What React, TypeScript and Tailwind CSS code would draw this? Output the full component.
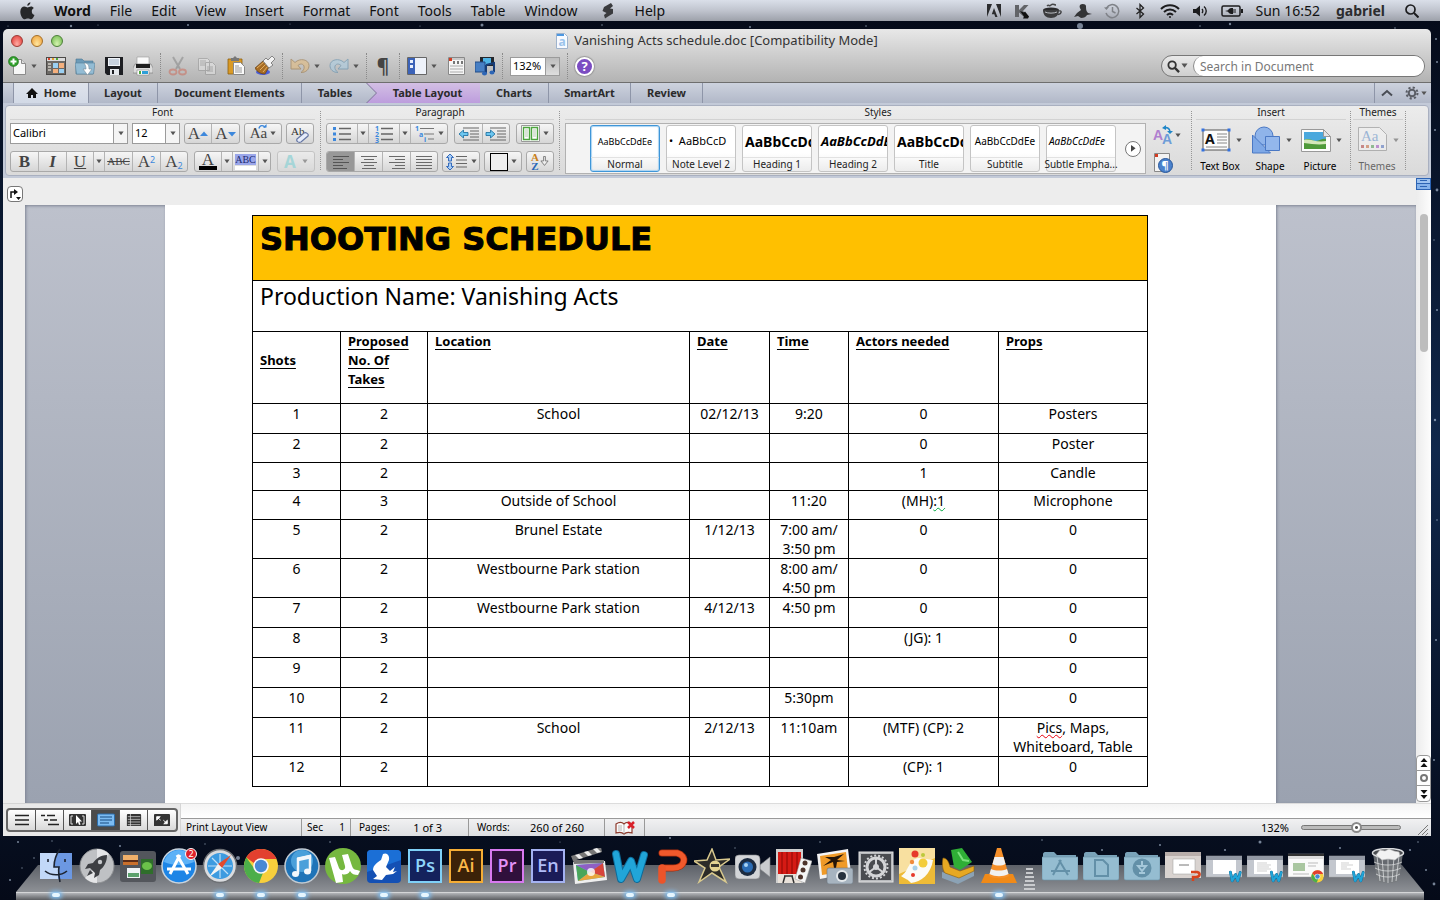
import type { ReactNode } from 'react'
import { useId } from 'react'

interface RowData {
	shot: string
	takes: string
	location?: string
	date?: string
	time?: string
	actors?: ReactNode
	props?: ReactNode
	height: string
}

const MENUS = ['File', 'Edit', 'View', 'Insert', 'Format', 'Font', 'Tools', 'Table', 'Window']

const ROWS: RowData[] = [
	{ shot: '1', takes: '2', location: 'School', date: '02/12/13', time: '9:20', actors: '0', props: 'Posters', height: 'h-[30px]' },
	{ shot: '2', takes: '2', actors: '0', props: 'Poster', height: 'h-[29px]' },
	{ shot: '3', takes: '2', actors: '1', props: 'Candle', height: 'h-[28px]' },
	{
		shot: '4',
		takes: '3',
		location: 'Outside of School',
		time: '11:20',
		actors: (
			<>
				(MH)
				<span className="underline decoration-green-600 decoration-wavy decoration-1">:1</span>
			</>
		),
		props: 'Microphone',
		height: 'h-[29px]',
	},
	{ shot: '5', takes: '2', location: 'Brunel Estate', date: '1/12/13', time: '7:00 am/ 3:50 pm', actors: '0', props: '0', height: 'h-[39px]' },
	{ shot: '6', takes: '2', location: 'Westbourne Park station', time: '8:00 am/ 4:50 pm', actors: '0', props: '0', height: 'h-[39px]' },
	{ shot: '7', takes: '2', location: 'Westbourne Park station', date: '4/12/13', time: '4:50 pm', actors: '0', props: '0', height: 'h-[30px]' },
	{ shot: '8', takes: '3', actors: '(JG): 1', props: '0', height: 'h-[30px]' },
	{ shot: '9', takes: '2', props: '0', height: 'h-[30px]' },
	{ shot: '10', takes: '2', time: '5:30pm', props: '0', height: 'h-[30px]' },
	{
		shot: '11',
		takes: '2',
		location: 'School',
		date: '2/12/13',
		time: '11:10am',
		actors: '(MTF) (CP): 2',
		props: (
			<>
				<span className="underline decoration-red-600 decoration-wavy decoration-1">Pics</span>, Maps, Whiteboard, Table
			</>
		),
		height: 'h-[39px]',
	},
	{ shot: '12', takes: '2', actors: '(CP): 1', props: '0', height: 'h-[30px]' },
]

const STYLES = [
	{ name: 'Normal', sample: 'AaBbCcDdEe', look: 'text-[9px] justify-center' },
	{ name: 'Note Level 2', sample: '•  AaBbCcD', look: 'text-[11px]' },
	{ name: 'Heading 1', sample: 'AaBbCcDd', look: 'text-[14px] font-bold' },
	{ name: 'Heading 2', sample: 'AaBbCcDdE', look: 'text-[13px] font-bold italic' },
	{ name: 'Title', sample: 'AaBbCcDd', look: 'text-[14px] font-bold' },
	{ name: 'Subtitle', sample: 'AaBbCcDdEe', look: 'text-[10px] justify-center' },
	{ name: 'Subtle Empha...', sample: 'AaBbCcDdEe', look: 'text-[10px] italic text-[#8c8c8c]' },
]

// x, y, radius of the brighter stars on the desktop
const STARS = [
	[8, 26, 0.6], [71, 26, 1.2], [98, 25, 0.6], [188, 25, 1], [290, 24, 0.5], [420, 26, 0.6], [482, 25, 1.5], [602, 25, 0.8],
	[750, 27, 1], [866, 26, 0.8], [1080, 26, 3], [1200, 26, 0.8], [1230, 24, 1.2], [1395, 28, 0.8], [1436, 39, 1], [1437, 62, 1],
	[1435, 130, 1], [1437, 190, 1.4], [1434, 240, 0.7], [1437, 310, 1], [1435, 420, 1.2], [1437, 520, 0.8], [1436, 640, 1], [1434, 760, 1],
	[18, 842, 1], [34, 858, 0.8], [52, 841, 0.7], [120, 846, 1], [205, 844, 0.7], [238, 858, 2], [330, 842, 0.8], [560, 842, 0.6],
	[670, 838, 1], [735, 848, 0.7], [820, 842, 0.8], [960, 850, 0.8], [1042, 840, 0.8], [1102, 850, 1], [1160, 845, 1], [1225, 850, 1.1],
	[1260, 842, 1.5], [1340, 848, 1], [1410, 850, 1.1], [1426, 870, 1], [1434, 884, 1.4], [10, 880, 1], [22, 868, 0.7], [1418, 842, 0.8],
]

const Arrow = ({ className = 'w-2' }: { className?: string }) => (
	<svg viewBox="0 0 8 6" className={`shrink-0 ${className}`} aria-hidden="true">
		<path d="M.5.5h7L4 5.5z" fill="#555" />
	</svg>
)

const Dots = () => <div className="-mx-[2px] h-[26px] border-l border-dotted border-[#8a8a8a]" />

const GroupLine = () => <div className="my-[5px] border-l border-dotted border-[#969696]" />

const Tool = ({ label, faded = false, children }: { label: string; faded?: boolean; children: ReactNode }) => (
	<button type="button" aria-label={label} className={`h-5 w-5 shrink-0 ${faded ? 'opacity-45' : ''}`}>
		<svg viewBox="0 0 20 20" className="h-5 w-5">
			{children}
		</svg>
	</button>
)

const ButtonSet = ({ children, faded = false }: { children: ReactNode; faded?: boolean }) => (
	<div
		className={`flex h-[21px] divide-x divide-[#b4b4b4] overflow-hidden rounded-[3px] border border-[#a9a9a9] bg-linear-to-b from-[#f6f6f6] to-[#d6d6d6] ${faded ? 'opacity-50' : ''}`}
	>
		{children}
	</div>
)

const Key = ({ label, width = 'w-7', pressed = false, children }: { label: string; width?: string; pressed?: boolean; children?: ReactNode }) => (
	<button
		type="button"
		aria-label={label}
		className={`flex items-center justify-center gap-[3px] font-['Liberation_Serif',serif] text-[17px] leading-none text-[#444] ${width} ${pressed ? 'bg-[#989898]' : ''}`}
	>
		{children}
	</button>
)

const ArrowKey = ({ label }: { label: string }) => (
	<Key label={label} width="w-[11px]">
		<Arrow className="w-[6px]" />
	</Key>
)

const Lines = ({ rows, color }: { rows: number[][]; color: string }) => (
	<svg viewBox="0 0 20 16" className="h-4 w-5" aria-hidden="true">
		{rows.map(([x, w, y]) => (
			<rect key={`${x}-${y}`} x={x} y={y} width={w} height="1" fill={color} />
		))}
	</svg>
)

const Combo = ({ label, value, width, small = false }: { label: string; value: string; width: string; small?: boolean }) => (
	<div className={`relative flex border border-[#9b9b9b] bg-white ${small ? 'h-[19px]' : 'h-[21px]'} ${width}`}>
		<select aria-label={label} className="w-full appearance-none bg-transparent pl-[2px] text-[11px] text-black outline-none">
			<option>{value}</option>
		</select>
		<span
			className={`pointer-events-none absolute inset-y-0 right-0 flex w-[14px] items-center justify-center border-l border-[#9b9b9b] ${small ? 'bg-linear-to-b from-[#bdbdbd] to-[#dedede]' : 'bg-[#f4f4f4]'}`}
		>
			<Arrow className="w-[6px]" />
		</span>
	</div>
)

const Group = ({ title, className = '', children }: { title: string; className?: string; children: ReactNode }) => (
	<div className={`flex flex-col ${className}`}>
		<div className="mb-[3px] h-[14px] border-b border-[#d2d2d2] text-center text-[10px] leading-[13px]">{title}</div>
		{children}
	</div>
)

const Tab = ({ children, className = '' }: { children: ReactNode; className?: string }) => (
	<button type="button" role="tab" className={`flex items-center justify-center gap-[6px] border-r border-[#8e95a8] ${className}`}>
		{children}
	</button>
)

const MenuBar = () => (
	<header className="relative flex h-[21px] items-center bg-linear-to-b from-[#dadfe9] via-[#c0c4ce] to-[#9da1aa] pr-[21px] pl-5 text-[14px] leading-[21px] text-[#111]">
		<button type="button" aria-label="Apple" className="mr-[19px] w-[15px]">
			<svg viewBox="0 0 15 18" className="h-[18px] w-[15px]">
				<path
					d="M10.4.3c.1 1.7-1.3 3.4-3.1 3.5C7.1 2.1 8.6.5 10.4.3zM13.8 6.1c-1.3.8-2 1.9-2 3.3 0 1.7 1 3 2.7 3.6-.8 2.2-2.1 4.3-3.7 4.3-1.2 0-1.5-.7-2.9-.7s-1.9.7-3 .7C2.7 17.3.3 13.3.3 9.7c0-3.3 2.1-5.1 4.1-5.1 1.3 0 2.4.9 3.2.9.8 0 2-.9 3.5-.9 1.1 0 2.1.6 2.7 1.5z"
					fill="#262729"
				/>
			</svg>
		</button>
		<nav className="flex items-center gap-[19px]">
			<button type="button" className="font-bold">
				Word
			</button>
			{MENUS.map((menu) => (
				<button type="button" key={menu}>
					{menu}
				</button>
			))}
			<div className="flex items-center gap-5 pl-1">
				<button type="button" aria-label="Scripts">
					<svg viewBox="0 0 14 16" className="h-4 w-[14px]">
						<path d="m10 0-7 4-1.5 4 4 2L3 12l1 3.5 3-2 5-3V6l-3-.5L12 3z" fill="#3a3b3e" />
					</svg>
				</button>
				<button type="button">Help</button>
			</div>
		</nav>
		<div className="ml-auto flex items-center gap-3">
			<svg viewBox="0 0 16 16" className="h-4 w-4">
				<path d="M1 1h5L1 14zM10 1h5v13zM8 5l3.5 9H9.3l-1-2.8H5.8z" fill="#2b2c2e" />
			</svg>
			<svg viewBox="0 0 16 16" className="h-4 w-4">
				<path d="M1 2h4v5l5-5h4.5L9 8l6 6h-5L5 9.5V14H1z" fill="#626468" />
				<path d="m6 8 4 1.5 1-1 4 5-1 2H9l1-2z" fill="#111" />
			</svg>
			<svg viewBox="0 0 20 16" className="h-4 w-5">
				<ellipse cx="9" cy="7" rx="8" ry="2.6" fill="#2a2a2c" />
				<path d="M1 7c0 5 3 8 8 8s8-3 8-8" fill="#3c3c3e" />
				<path d="M3 9c3 1.5 9 1.5 12 0" fill="none" stroke="#b9bcc2" />
				<path d="M17 8c3-1 3 3-1 3.5" fill="none" stroke="#3c3c3e" strokeWidth="1.3" />
				<path d="M5 3c2-2 2 1 4-1s3 0 5 0" fill="none" stroke="#47484a" strokeWidth="1.5" />
			</svg>
			<svg viewBox="0 0 18 16" className="h-4 w-[18px]">
				<path d="M6 2c2-2 6-1 6 1 0 3 0 5 2 7l4 1-5 1c-1 2-3 3-6 3l-3-2-4 1 3-4 4-3c-1-2-2-3-1-5z" fill="#333436" />
			</svg>
			<svg viewBox="0 0 16 16" className="h-4 w-4" fill="none" stroke="#7f8288" strokeWidth="1.5">
				<path d="M2.5 5A6.5 6.5 0 1 1 2 10M8.5 4v4.5l3 1.5" />
				<path d="M0 4.5 2.5 7 5 4z" fill="#7f8288" stroke="none" />
			</svg>
			<svg viewBox="0 0 16 16" className="h-4 w-4" fill="none" stroke="#222" strokeWidth="1.3">
				<path d="m4.5 5 7 6L8 14.5v-13L11.5 5l-7 6" />
			</svg>
			<svg viewBox="0 0 20 16" className="h-4 w-5" fill="none" stroke="#1c1c1e" strokeWidth="2">
				<path d="M1 6c5-5 13-5 18 0M4 9c3.5-3.3 8.500-3.3 12 0M7 12c1.8-1.6 4.2-1.6 6 0" />
				<circle cx="10" cy="14" r="1" fill="#1c1c1e" stroke="none" />
			</svg>
			<svg viewBox="0 0 16 16" className="h-4 w-4" fill="none" stroke="#1c1c1e" strokeWidth="1.4">
				<path d="M1 6h3l4-3.5v11L4 10H1z" fill="#1c1c1e" stroke="none" />
				<path d="M10 6c1 1 1 3 0 4M12 3.5c3 2.5 3 6.5 0 9" />
			</svg>
			<svg viewBox="0 0 24 16" className="h-4 w-6">
				<rect x="2" y="3" width="18" height="10" rx="1.5" fill="none" stroke="#1c1c1e" strokeWidth="1.5" />
				<path d="M21 6h2v4h-2zM5 8l3-.7C9 5 11 5 13 5v1.500h3v1h-3v1h3v1h-3V11c-2 0-4 0-5-2.3z" fill="#1c1c1e" />
			</svg>
			<span className="mr-1">Sun 16:52</span>
			<span className="mr-2 font-bold text-[#2c2c2e]">gabriel</span>
			<svg viewBox="0 0 14 14" className="h-[14px] w-[14px]" fill="none" stroke="#1c1c1e" strokeWidth="1.7">
				<circle cx="5.5" cy="5.5" r="4.5" />
				<path d="m9 9 4.5 4.5" strokeWidth="2" />
			</svg>
		</div>
	</header>
)

const TitleBar = () => (
	<div className="relative flex h-[23px] items-center justify-center">
		<div className="absolute left-2 flex gap-2">
			<button type="button" aria-label="Close" className="h-3 w-3 rounded-full border border-[#9c3a35] bg-radial-[at_50%_80%] from-[#ffaba3] to-[#e0342f]" />
			<button type="button" aria-label="Minimise" className="h-3 w-3 rounded-full border border-[#a56f28] bg-radial-[at_50%_80%] from-[#ffe7a0] to-[#ee9c32]" />
			<button type="button" aria-label="Zoom window" className="h-3 w-3 rounded-full border border-[#4d7f3a] bg-radial-[at_50%_80%] from-[#d5f3b0] to-[#6bb848]" />
		</div>
		<svg viewBox="0 0 12 16" className="mr-[6px] h-4 w-3">
			<path d="M.5.5h8l3 3v12H.5z" fill="#f7faff" stroke="#9fb3cc" />
			<path d="M1 1h7v2H1z" fill="#4d97e0" />
			<text x="6" y="13" fontSize="12" fontWeight="bold" textAnchor="middle" fill="#9cc4ec">
				a
			</text>
		</svg>
		<h1 className="text-[13px] leading-[23px] text-[#333]">Vanishing Acts schedule.doc [Compatibility Mode]</h1>
	</div>
)

const Toolbar = () => {
	const searchId = useId()
	return (
		<div className="flex h-[30px] items-center pr-[6px] pb-[2px] pl-[5px]">
			<div className="flex items-center gap-[9px]">
				<div className="flex items-center gap-[3px]">
					<Tool label="New">
						<path d="M5.5 3.5h8l4 4v11h-12z" fill="#f7f7f7" stroke="#8b8b8b" />
						<path d="M13.5 3.5v4h4" fill="#ddd" stroke="#8b8b8b" />
						<circle cx="5.5" cy="5.5" r="5" fill="#2f9e2a" stroke="#1d6e1a" strokeWidth=".6" />
						<path d="M5.5 2.5v6M2.5 5.5h6" stroke="#fff" strokeWidth="2" />
					</Tool>
					<Arrow className="w-[6px]" />
				</div>
				<Tool label="Gallery">
					<rect x=".5" y="1.5" width="19" height="17" fill="#6d6a66" stroke="#4c4a48" />
					<path d="M1 2h18v3H1z" fill="#dcdcdc" />
					<path d="M2 2h2v2H2z" fill="#d9442c" />
					<path d="M6 2h2v2H6z" fill="#e9a52e" />
					<path d="M10 2h2v2h-2z" fill="#4eab3c" />
					<path d="M2 7h3v2H2zM2 10h3v2H2zM2 13h3v2H2z" fill="#b9b5ae" />
					<path d="M7 7h5v5H7zM13 13h5v4h-5z" fill="#9bd0f2" />
					<path d="M13 7h5v5h-5zM7 13h5v4H7z" fill="#f5b07d" />
				</Tool>
				<Tool label="Open">
					<path d="M1 3h6l2 2h9v13H1z" fill="#6c9bb8" stroke="#4c7590" strokeWidth=".6" />
					<path d="M0 7h20l-1.500 11h-17z" fill="#93bcd4" stroke="#587f98" strokeWidth=".6" />
					<path d="M9 7c4 0 5 2 5 6h3l-4.500 6L8 13h3c0-2-.5-4-2-6z" fill="#fff" stroke="#7a8c98" strokeWidth=".6" />
				</Tool>
				<Tool label="Save">
					<path d="M1 1h18v18H3l-2-2z" fill="#1d1e22" />
					<path d="M4 2h12v8H4z" fill="#f0f3f7" />
					<path d="M5 4h10M5 6h10M5 8h10" stroke="#9fb0c4" />
					<path d="M6 13h9v6H6z" fill="#e5e8ec" />
					<path d="M8 14h2v4H8z" fill="#1d1e22" />
				</Tool>
				<Tool label="Print">
					<path d="M4 1h12v8H4z" fill="#fafafa" stroke="#999" strokeWidth=".6" />
					<path d="M2 8h16l2 4v5H0v-5z" fill="#dcdcdc" stroke="#777" strokeWidth=".6" />
					<path d="M3 8h14v4H3z" fill="#1e1e1e" />
					<path d="M4 14h12v5H4z" fill="#fff" stroke="#888" strokeWidth=".6" />
					<path d="M6 15h2v3H6z" fill="#4eab3c" />
					<path d="M9 15h6v3H9z" fill="#2e9fd8" />
				</Tool>
				<Dots />
				<Tool label="Cut" faded>
					<path d="M5 1l7 12M15 1 8 13" stroke="#777" strokeWidth="2" />
					<g fill="none" stroke="#cf5d4a" strokeWidth="1.8">
						<ellipse cx="5" cy="16" rx="3.5" ry="2.5" />
						<ellipse cx="14.5" cy="16" rx="3.5" ry="2.5" />
					</g>
				</Tool>
				<Tool label="Copy" faded>
					<path d="M1.5 2.5h9l2 2v10h-11zM8.5 6.5h7l3 3v9h-10z" fill="#eee" stroke="#8a8a8a" />
					<path d="M3 5h6M3 7h5M3 9h5M10 11h6M10 13h6M10 15h6" stroke="#8a8a8a" />
				</Tool>
				<Tool label="Paste">
					<path d="M2 3h14v15H2z" fill="#d99a26" stroke="#8d6012" strokeWidth=".8" />
					<path d="M5 2h2l2-2 2 2h2v3H5z" fill="#777" />
					<path d="M7.5 6.5h7l4 4v8h-11z" fill="#fbfbfb" stroke="#888" />
					<path d="M9 10h4M9 12h7M9 14h7M9 16h7" stroke="#999" />
				</Tool>
				<Tool label="Format painter">
					<ellipse cx="8" cy="16" rx="7" ry="3" fill="#4b5ed8" />
					<path d="M0 12 8 5l6 6-4 7c-4 0-8-2-10-6z" fill="#a86d24" stroke="#5a3710" strokeWidth=".6" />
					<path d="m2 12 7-6M5 14l6-6M8 16l5-6" stroke="#e2b063" />
					<path d="m8 5 3-3 2 2 4-4 3 3-4 4 2 2-4 3z" fill="#f2f2f2" stroke="#6e6e6e" strokeWidth=".8" />
				</Tool>
				<Dots />
				<div className="flex items-center gap-1">
					<Tool label="Undo" faded>
						<path d="M1 3v10h10L8 9.500c3-3 7-1 6 3-.4 2-2 3-3 4 5 0 8-3 8-7 0-6-9-8-14-3z" fill="#ecb767" stroke="#8f6120" />
					</Tool>
					<Arrow className="w-[6px]" />
				</div>
				<div className="flex items-center gap-1">
					<Tool label="Redo" faded>
						<path d="M19 3v10H9l3-3.500c-3-3-7-1-6 3 .4 2 2 3 3 4-5 0-8-3-8-7 0-6 9-8 14-3z" fill="#a3d0ec" stroke="#3f7ca5" />
					</Tool>
					<Arrow className="w-[6px]" />
				</div>
				<Dots />
				<button type="button" aria-label="Show formatting" className="w-[18px] text-[19px] leading-5 font-bold text-[#444]">
					¶
				</button>
				<Dots />
				<div className="flex items-center gap-1">
					<Tool label="Sidebar">
						<path d="M.5 1.5h19v17H.5z" fill="#eef2fa" stroke="#666" />
						<path d="M1 2h7v16H1z" fill="#3b62b8" />
						<path d="M3 4h3v3H3zM3 9h3v3H3z" fill="#e8effc" />
					</Tool>
					<Arrow className="w-[6px]" />
				</div>
				<Tool label="Toolbox">
					<path d="M2.5 1.5h16v17h-16z" fill="#f6f6f6" stroke="#888" />
					<path d="M3 2h15v2H3z" fill="#c9c9c9" />
					<path d="M3 2h3v3H3z" fill="#d33d23" />
					<path d="M7 5h2v3H7zM11 5h2v3h-2zM15 5h2v3h-2z" fill="#777" />
					<path d="M4 10h13M4 13h13M4 16h13" stroke="#aaa" />
				</Tool>
				<Tool label="Media browser">
					<path d="M5 1h14v9H5z" fill="#24272c" />
					<path d="M8 2h8v7H8z" fill="#4fb4e6" />
					<path d="M0 6h10v10H0z" fill="#477fc4" stroke="#234c86" />
					<path d="m11 9 8-2v9M11 9v8" fill="none" stroke="#173d78" strokeWidth="2" />
					<ellipse cx="9.5" cy="17.5" rx="2.5" ry="2" fill="#2e66b5" />
					<ellipse cx="17" cy="16.5" rx="2.5" ry="2" fill="#2e66b5" />
				</Tool>
				<Dots />
				<Combo label="Zoom level" value="132%" width="w-[50px]" small />
				<Dots />
				<button type="button" aria-label="Help" className="h-[19px] w-[19px] rounded-full border-2 border-white bg-[#7b4cc2] text-[13px] leading-[14px] font-bold text-white shadow-[0_0_1px_1px_#999]">
					?
				</button>
			</div>
			<div className="ml-auto flex h-[22px] w-[264px] items-center rounded-full border border-[#777] bg-linear-to-b from-[#e9e9e9] to-[#cfcfcf]">
				<label htmlFor={searchId} aria-label="Search" className="flex w-[31px] items-center justify-center gap-[1px]">
					<svg viewBox="0 0 14 14" className="h-[13px] w-[13px]" fill="none" stroke="#333" strokeWidth="2">
						<circle cx="5.5" cy="5.5" r="4" />
						<path d="m8.5 8.5 4.5 4.5" strokeWidth="2.5" />
					</svg>
					<Arrow className="w-[7px]" />
				</label>
				<input
					id={searchId}
					type="search"
					placeholder="Search in Document"
					className="h-5 min-w-0 flex-1 rounded-full border-l border-[#888] bg-white pl-[6px] text-[12px] text-black outline-none placeholder:text-[#777]"
				/>
			</div>
		</div>
	)
}

const TabStrip = () => (
	<div role="tablist" className="flex h-[21px] border-t border-[#6e6e6e] bg-linear-to-b from-[#cdd2de] to-[#b1b8c8] text-[11px] font-bold text-[#2b2b2b]">
		<div className="w-[11px] border-r border-[#8e95a8]" />
		<Tab className="w-[75px] bg-linear-to-b from-[#dfe3ec] to-[#d2d9e6]">
			<svg viewBox="0 0 12 10" className="h-[10px] w-3">
				<path d="M6 0 0 6h2v4h3V7h2v3h3V6h2z" fill="#111" />
			</svg>
			Home
		</Tab>
		<Tab className="w-[69px]">Layout</Tab>
		<Tab className="w-[144px]">Document Elements</Tab>
		<button type="button" role="tab" className="w-16 pl-[2px]">
			Tables
		</button>
		<div className="bg-[#7d7198] [clip-path:polygon(0_0,100%_0,100%_100%,0_100%,10px_50%)]">
			<button
				type="button"
				role="tab"
				className="ml-[1px] h-full w-[113px] bg-linear-to-b from-[#d3bfe4] to-[#bd9ddd] pl-[8px] [clip-path:polygon(0_0,100%_0,100%_100%,0_100%,10px_50%)]"
			>
				Table Layout
			</button>
		</div>
		<Tab className="w-[69px]">Charts</Tab>
		<Tab className="w-[82px]">SmartArt</Tab>
		<Tab className="w-[72px]">Review</Tab>
		<div className="ml-auto flex items-center gap-3 border-l border-[#8e95a8] pr-1 pl-[6px]">
			<button type="button" aria-label="Collapse ribbon">
				<svg viewBox="0 0 12 8" className="h-2 w-3" fill="none" stroke="#4a4d55" strokeWidth="2">
					<path d="m1 6.5 5-4.5 5 4.5" />
				</svg>
			</button>
			<button type="button" aria-label="Ribbon settings" className="flex items-center gap-[2px]">
				<svg viewBox="0 0 14 14" className="h-[14px] w-[14px]" fill="none" stroke="#5a5d65">
					<circle cx="7" cy="7" r="3.3" strokeWidth="2" />
					<circle cx="7" cy="7" r="5.5" strokeWidth="2" strokeDasharray="2.16 2.16" />
				</svg>
				<Arrow className="w-[6px]" />
			</button>
		</div>
	</div>
)

const FontGroup = () => (
	<Group title="Font" className="pr-[5px] pl-1">
		<div className="mb-[7px] flex gap-1">
			<Combo label="Font name" value="Calibri" width="w-[118px]" />
			<Combo label="Font size" value="12" width="w-[48px]" />
			<ButtonSet>
				<Key label="Grow font" width="w-[27px]">
					A
					<svg viewBox="0 0 8 6" className="-ml-[3px] w-2">
						<path d="M4 .5 8 5H0z" fill="#3d88dc" />
					</svg>
				</Key>
				<Key label="Shrink font" width="w-[27px]">
					A
					<svg viewBox="0 0 8 6" className="-ml-[3px] w-2">
						<path d="M4 5.5 8 1H0z" fill="#3d88dc" />
					</svg>
				</Key>
			</ButtonSet>
			<ButtonSet>
				<Key label="Change case" width="w-9">
					<span className="relative text-[15px]">
						Aa
						<svg viewBox="0 0 10 6" className="absolute -top-[2px] left-2 w-[9px]">
							<path d="M1 5c1-4 5-4 7-1" fill="none" stroke="#3d88dc" strokeWidth="1.5" />
							<path d="M5.5 4h4V0z" fill="#3d88dc" />
						</svg>
					</span>
					<Arrow className="w-[6px]" />
				</Key>
			</ButtonSet>
			<ButtonSet>
				<Key label="Clear formatting" width="w-[26px]">
					<svg viewBox="0 0 20 18" className="h-[18px] w-5">
						<text x="1" y="10" fontSize="11" fill="#333">
							Ab
						</text>
						<path d="m7 14 7-6c2-1 5 1 4 3l-7 6c-3 1-5-1-4-3z" fill="#e6ecfa" stroke="#6677a4" strokeWidth="1.2" />
					</svg>
				</Key>
			</ButtonSet>
		</div>
		<div className="flex gap-[6px]">
			<ButtonSet>
				<Key label="Bold">
					<b>B</b>
				</Key>
				<Key label="Italic">
					<b>
						<i>I</i>
					</b>
				</Key>
				<Key label="Underline" width="w-[27px]">
					<span className="underline">U</span>
				</Key>
				<ArrowKey label="Underline style" />
				<Key label="Strikethrough">
					<span className="text-[11px] line-through">ABC</span>
				</Key>
				<Key label="Superscript">
					<span>
						A<sup className="font-['Noto_Sans',sans-serif] text-[9px] text-[#3d88dc]">2</sup>
					</span>
				</Key>
				<Key label="Subscript" width="w-[26px]">
					<span>
						A<sub className="font-['Noto_Sans',sans-serif] text-[9px] text-[#3d88dc]">2</sub>
					</span>
				</Key>
			</ButtonSet>
			<ButtonSet>
				<Key label="Font colour" width="w-[27px]">
					<span className="border-b-4 border-black px-[3px] leading-[13px]">A</span>
				</Key>
				<ArrowKey label="Font colour menu" />
				<Key label="Highlight" width="w-[26px]">
					<span className="border-b-4 border-white text-[10px] leading-[12px]">
						<span className="bg-[#9aa6ea] text-[#222c70]">ABC</span>
					</span>
				</Key>
				<ArrowKey label="Highlight menu" />
			</ButtonSet>
			<ButtonSet faded>
				<Key label="Text effects" width="w-9">
					<b className="font-['Noto_Sans',sans-serif] text-[#6fcfd3]">A</b>
					<Arrow className="ml-[3px] w-[6px]" />
				</Key>
			</ButtonSet>
		</div>
	</Group>
)

const ALIGN = [
	{ label: 'Align left', rows: [[2, 16, 2], [2, 10, 5], [2, 16, 8], [2, 10, 11], [2, 14, 14]] },
	{ label: 'Centre', rows: [[2, 16, 2], [5, 10, 5], [2, 16, 8], [5, 10, 11], [3, 14, 14]] },
	{ label: 'Align right', rows: [[2, 16, 2], [8, 10, 5], [2, 16, 8], [8, 10, 11], [5, 13, 14]] },
	{ label: 'Justify', rows: [[2, 16, 2], [2, 16, 5], [2, 16, 8], [2, 16, 11], [2, 16, 14]] },
]

const ParagraphGroup = () => (
	<Group title="Paragraph" className="px-[5px]">
		<div className="mb-[7px] flex justify-between gap-[6px]">
			<ButtonSet>
				<Key label="Bullets" width="w-[31px]">
					<svg viewBox="0 0 20 16" className="h-4 w-5">
						<path d="M1 1h3v3H1zM1 6.5h3v3H1zM1 12h3v3H1z" fill="#3d88dc" />
						<path d="M7 2.5h12M7 8h12M7 13.5h12" stroke="#666" strokeWidth="1.4" />
					</svg>
				</Key>
				<ArrowKey label="Bullet style" />
				<Key label="Numbering" width="w-[31px]">
					<svg viewBox="0 0 20 18" className="h-[18px] w-5 font-['Noto_Sans',sans-serif] text-[7px] font-bold" fill="#3d88dc">
						<text x="1" y="6">1</text>
						<text x="1" y="12">2</text>
						<text x="1" y="18">3</text>
						<path d="M7 3.5h12M7 9h12M7 14.5h12" stroke="#666" strokeWidth="1.4" />
					</svg>
				</Key>
				<ArrowKey label="Number style" />
				<Key label="Multilevel list" width="w-9">
					<svg viewBox="0 0 20 18" className="h-[18px] w-5 font-['Noto_Sans',sans-serif] text-[7px] font-bold" fill="#3d88dc">
						<text x="0" y="6">1</text>
						<text x="4" y="12">a</text>
						<text x="9" y="17">i</text>
						<path d="M5 3.5h14M9 9h10M13 14h6" stroke="#777" strokeWidth="1.2" />
					</svg>
					<Arrow className="w-[6px]" />
				</Key>
			</ButtonSet>
			<ButtonSet>
				<Key label="Decrease indent">
					<svg viewBox="0 0 22 16" className="h-4 w-[22px]">
						<path d="M5 2h16M12 5h9M12 8h9M12 11h9M5 14h16" stroke="#666" />
						<path d="m1 8 4.5-4v2.5H10v3H5.5V12z" fill="#6cc6f0" stroke="#156a9c" strokeWidth=".8" />
					</svg>
				</Key>
				<Key label="Increase indent" width="w-[26px]">
					<svg viewBox="0 0 22 16" className="h-4 w-[22px]">
						<path d="M5 2h16M12 5h9M12 8h9M12 11h9M5 14h16" stroke="#666" />
						<path d="M10 8 5.5 4v2.5H1v3h4.500V12z" fill="#6cc6f0" stroke="#156a9c" strokeWidth=".8" />
					</svg>
				</Key>
			</ButtonSet>
			<ButtonSet>
				<Key label="Columns" width="w-9">
					<svg viewBox="0 0 19 17" className="h-[17px] w-[19px]">
						<path d="M.5.5h18v16H.5z" fill="#fff" stroke="#999" />
						<path d="M2.5 2.5h6v12h-6zM10.5 2.5h6v12h-6z" fill="#fff" stroke="#4da53f" strokeWidth="1.4" />
						<path d="M4 5h3M4 7h3M4 9h3M4 11h3M12 5h3M12 7h3M12 9h3M12 11h3" stroke="#b5c9b0" />
					</svg>
					<Arrow className="w-[6px]" />
				</Key>
			</ButtonSet>
		</div>
		<div className="flex gap-1">
			<ButtonSet>
				{ALIGN.map((item, i) => (
					<Key key={item.label} label={item.label} pressed={i === 0} width={i === 3 ? 'w-[26px]' : 'w-7'}>
						<Lines rows={item.rows} color={i === 0 ? '#555' : '#6a6a6a'} />
					</Key>
				))}
			</ButtonSet>
			<ButtonSet>
				<Key label="Line spacing" width="w-9">
					<svg viewBox="0 0 22 18" className="h-[18px] w-[22px]">
						<path d="m4 1 3.5 3.5h-2V8h-3V4.500h-2zM4 17 .5 13.5h2V10h3v3.500h2z" fill="#a9cdf5" stroke="#245fb5" strokeWidth=".9" />
						<path d="M10 3.5h11M10 7h11M10 10.5h11M10 14h11" stroke="#666" />
					</svg>
					<Arrow className="w-[6px]" />
				</Key>
			</ButtonSet>
			<ButtonSet>
				<Key label="Borders" width="w-9">
					<span className="h-[18px] w-[18px] border border-black bg-[#eee]" />
					<Arrow className="w-[6px]" />
				</Key>
			</ButtonSet>
			<ButtonSet>
				<Key label="Sort" width="w-[26px]">
					<span className="flex flex-col text-[11px] leading-[9px] font-bold">
						<span className="text-[#c8801a]">A</span>
						<span className="text-[#2867b8]">Z</span>
					</span>
					<svg viewBox="0 0 10 12" className="-ml-[2px] w-[9px]">
						<path d="M4 .5h2v5h3l-4 5-4-5h3z" fill="#eee" stroke="#777" />
					</svg>
				</Key>
			</ButtonSet>
		</div>
	</Group>
)

const StylesGroup = () => (
	<Group title="Styles" className="min-w-0 flex-1 pl-[5px]">
		<div className="flex flex-1 pb-[1px]">
			<div className="flex min-w-0 flex-1 items-center border border-[#b1b1b1] bg-[#f3f3f3] pr-1 pl-6">
				<div className="flex min-w-0 flex-1 gap-[6px]">
					{STYLES.map((style, i) => (
						<button
							type="button"
							key={style.name}
							className={`flex h-[47px] w-[70px] shrink-0 flex-col rounded-[3px] border bg-linear-to-b from-white from-60% to-[#ececec] ${i === 0 ? 'border-[#3f96d8] shadow-[inset_0_0_1px_1px_#a9d3f2]' : 'border-[#c4c4c4]'}`}
						>
							<span className={`flex h-[31px] w-full items-center overflow-hidden px-[2px] whitespace-pre text-black ${style.look}`}>{style.sample}</span>
							<span className="flex w-full justify-center border-t border-[#e2e2e2] text-[10px] leading-[13px] whitespace-nowrap">{style.name}</span>
						</button>
					))}
				</div>
				<button type="button" aria-label="More styles" className="flex h-4 w-4 items-center justify-center rounded-full border border-[#777] bg-white">
					<svg viewBox="0 0 6 8" className="ml-[1px] w-[5px]">
						<path d="M0 0v8l5.5-4z" fill="#444" />
					</svg>
				</button>
			</div>
			<div className="flex w-[45px] flex-col gap-2 pt-[2px] pl-[7px]">
				<button type="button" aria-label="Change styles" className="flex items-center gap-[2px]">
					<svg viewBox="0 0 20 20" className="h-5 w-5 font-['Liberation_Sans',sans-serif] text-[14px] font-bold">
						<text x="0" y="15" fill="#b07fd0">
							A
						</text>
						<text x="9" y="19" fill="#6f9dd8">
							A
						</text>
						<path d="M11 3c3-1 5 0 6 3" fill="none" stroke="#1f86c8" strokeWidth="1.5" />
						<path d="M14 6h6l-3 3zM13 0v5L9 3z" fill="#1f86c8" />
					</svg>
					<Arrow className="w-[6px]" />
				</button>
				<button type="button" aria-label="Style guides">
					<svg viewBox="0 0 20 20" className="h-5 w-5">
						<path d="M1.5.5h15v18h-15z" fill="#f3f3f3" stroke="#888" />
						<path d="M2 1h3v3H2z" fill="#d33d23" />
						<circle cx="12.5" cy="12.5" r="7" fill="#4b82cc" stroke="#28579b" />
						<text x="12" y="16" fontSize="11" fontWeight="bold" textAnchor="middle" fill="#fff">
							¶
						</text>
					</svg>
				</button>
			</div>
		</div>
	</Group>
)

const BigButton = ({ label, faded = false, children }: { label: string; faded?: boolean; children: ReactNode }) => (
	<button type="button" className={`flex w-[50px] flex-col items-center ${faded ? 'opacity-55' : ''}`}>
		<span className="flex h-[34px] items-center gap-[5px]">
			<svg viewBox="0 0 30 30" className="h-[30px] w-[30px]">
				{children}
			</svg>
			<Arrow className="w-[6px]" />
		</span>
		<span className="pr-[2px] text-[10px] leading-[18px] whitespace-nowrap text-black">{label}</span>
	</button>
)

const Ribbon = () => (
	<div className="bg-[#c3cad8] p-[2px] text-[#222]">
		<div className="flex h-[71px] rounded-[4px] border border-[#a9b0c0] bg-linear-to-b from-[#ececec] to-[#dadada]">
			<FontGroup />
			<GroupLine />
			<ParagraphGroup />
			<GroupLine />
			<StylesGroup />
			<GroupLine />
			<Group title="Insert" className="px-1">
				<div className="flex">
					<BigButton label="Text Box">
						<path d="M2 5h26v20H2z" fill="#fcfcfc" stroke="#555" />
						<text x="4" y="19" fontSize="14" fontWeight="bold" fill="#111">
							A
						</text>
						<path d="M16 9h10M16 12h10M16 15h10M16 18h10M5 22h21" stroke="#888" />
						<path d="M.5 3.5h3v3h-3zM26.5 3.5h3v3h-3zM.5 23.5h3v3h-3zM26.5 23.5h3v3h-3z" fill="#3472e0" />
					</BigButton>
					<BigButton label="Shape">
						<circle cx="13" cy="11" r="9" fill="#8fb4ea" stroke="#4a78c4" />
						<path d="M1.5 10v18h18z" fill="#7ea8e6" stroke="#4a78c4" />
						<path d="M14.5 11.5h14v14h-14z" fill="#93b7ec" stroke="#4a78c4" />
					</BigButton>
					<BigButton label="Picture">
						<path d="M.5 4.5h22l7 7v15H.5z" fill="#fdfdfd" stroke="#999" />
						<path d="M3 7h22v17H3z" fill="#4aa8dd" />
						<path d="M3 15c5-3 8 1 12 1s6-3 10-2v10H3z" fill="#4f9a3a" />
						<path d="M3 15c6-2 12 3 22 1v3c-8 1-14 0-22-1z" fill="#d4e8ba" />
						<path d="M22.5 4.5v7h7z" fill="#e4e4e4" stroke="#999" />
					</BigButton>
				</div>
			</Group>
			<GroupLine />
			<Group title="Themes" className="px-[2px]">
				<BigButton label="Themes" faded>
					<path d="M.5 2.5h21l7 7v16H.5z" fill="#f4f4f4" stroke="#888" />
					<text x="3" y="16" fontSize="15" className="font-['Liberation_Serif',serif]" fill="#5f8fc9">
						Aa
					</text>
					<path d="M3 20h3v3H3z" fill="#b13f3f" />
					<path d="M8 20h3v3H8z" fill="#c96a3a" />
					<path d="M13 20h3v3h-3z" fill="#4e9a50" />
					<path d="M18 20h3v3h-3z" fill="#a04ec0" />
					<path d="M23 20h3v3h-3z" fill="#4f70c0" />
				</BigButton>
			</Group>
			<GroupLine />
			<div className="w-[22px]" />
		</div>
	</div>
)

const ScheduleTable = () => (
	<table className="w-full table-fixed border-collapse text-center text-[14px] leading-[19px] text-black [&_td]:border [&_td]:border-black [&_td]:px-1 [&_td]:align-top [&_th]:border [&_th]:border-black [&_th]:px-[7px] [&_th]:text-left [&_th]:align-top">
		<colgroup>
			<col className="w-[88px]" />
			<col className="w-[87px]" />
			<col />
			<col className="w-20" />
			<col className="w-[79px]" />
			<col className="w-[150px]" />
			<col className="w-[149px]" />
		</colgroup>
		<thead>
			<tr className="h-[65px] bg-[#ffc000]">
				<th colSpan={7} className="font-['DejaVu_Sans',sans-serif] text-[32px] leading-[46px] font-bold [-webkit-text-stroke:1px_black]">
					SHOOTING SCHEDULE
				</th>
			</tr>
			<tr className="h-[51px]">
				<th colSpan={7} className="text-[23px] leading-[30px] font-normal">
					Production Name: Vanishing Acts
				</th>
			</tr>
			<tr className="h-[72px] text-[13px] underline underline-offset-3">
				<th>
					<br />
					Shots
				</th>
				<th>Proposed No. Of Takes</th>
				<th>Location</th>
				<th>Date</th>
				<th>Time</th>
				<th>Actors needed</th>
				<th>Props</th>
			</tr>
		</thead>
		<tbody>
			{ROWS.map((row) => (
				<tr key={row.shot} className={row.height}>
					<td>{row.shot}</td>
					<td>{row.takes}</td>
					<td>{row.location}</td>
					<td>{row.date}</td>
					<td>{row.time}</td>
					<td>{row.actors}</td>
					<td>{row.props}</td>
				</tr>
			))}
		</tbody>
	</table>
)

const DocumentArea = () => (
	<div className="flex flex-1">
		<div className="flex min-w-0 flex-1 flex-col bg-[#ededed]">
			<div className="h-[27px] pt-[5px] pl-1">
				<button type="button" aria-label="Tab stop" className="h-4 w-4 rounded-[4px] border border-[#777] bg-white">
					<svg viewBox="0 0 14 14" className="h-[14px] w-[14px]">
						<path d="M3 11V5h4" fill="none" stroke="#111" strokeWidth="1.5" />
						<path d="m6 2 4 3-4 3zM8 10h5l-2.500 3z" fill="#111" />
					</svg>
				</button>
			</div>
			<div className="flex flex-1 pl-[22px]">
				<div className="flex-1 bg-linear-to-b from-[#bdc1cc] to-[#9ba2b0] shadow-[inset_1px_1px_3px_#7d8493]" />
				<main className="w-full max-w-[1111px] bg-white pt-[10px] pr-32 pb-4 pl-[87px]">
					<ScheduleTable />
				</main>
				<div className="flex-1 bg-linear-to-b from-[#bdc1cc] to-[#9ba2b0] shadow-[inset_1px_1px_3px_#7d8493]" />
			</div>
		</div>
		<div className="flex w-[15px] flex-col items-center bg-linear-to-r from-[#ececec] to-[#fdfdfd]">
			<div className="h-[6px] w-full border border-[#2c64b4] bg-[#9cc2f0] px-[3px] pt-[1px]">
				<div className="border-b border-[#2c64b4]" />
			</div>
			<div className="h-[6px] w-full border border-t-0 border-[#2c64b4] bg-[#85b2ea] px-[3px] pt-[2px]">
				<div className="border-b border-[#2c64b4]" />
			</div>
			<div className="mt-6 h-[138px] w-2 rounded-full bg-[#bdbdbd]" />
			<div className="mt-auto mb-[1px] flex w-full flex-col divide-y divide-[#999] rounded-[4px] border border-[#999] bg-white">
				<button type="button" aria-label="Previous page" className="flex h-[15px] items-center justify-center">
					<svg viewBox="0 0 8 10" className="w-2">
						<path d="m4 0 3.5 4h-7zM4 5l3.5 4h-7z" fill="#111" />
					</svg>
				</button>
				<button type="button" aria-label="Browse object" className="flex h-[15px] items-center justify-center">
					<span className="h-2 w-2 rounded-full border-2 border-[#777]" />
				</button>
				<button type="button" aria-label="Next page" className="flex h-[15px] items-center justify-center">
					<svg viewBox="0 0 8 10" className="w-2">
						<path d="M4 5 .5 1h7zM4 10 .5 6h7z" fill="#111" />
					</svg>
				</button>
			</div>
		</div>
	</div>
)

const StatusBar = () => {
	const zoomId = useId()
	return (
		<footer className="flex h-[33px] text-[10px] text-black">
			<div className="flex w-[178px] items-center border-t border-r border-[#d5d5d5] bg-[#e9e9e9] pl-[3px]">
				<div className="flex h-6 divide-x divide-[#555] overflow-hidden rounded-[4px] border-2 border-[#666] bg-linear-to-b from-white to-[#d9d9d9]">
					<Key label="Draft view">
						<svg viewBox="0 0 18 14" className="w-[18px]">
							<path d="M2 2.5h14M2 7h14M2 11.5h14" stroke="#222" strokeWidth="1.5" />
						</svg>
					</Key>
					<Key label="Outline view">
						<svg viewBox="0 0 18 14" className="w-[18px]">
							<path d="M0 2.5h4M6 2.5h8M3 7h4M9 7h7M7 11.5h11" stroke="#222" strokeWidth="1.5" />
						</svg>
					</Key>
					<Key label="Publishing layout view">
						<svg viewBox="0 0 18 14" className="w-[18px]">
							<rect x="0" y="1" width="17" height="12" rx="1" fill="#333" />
							<path d="M4 3H2v8h2M13 3h2v8h-2" fill="none" stroke="#ddd" />
							<path d="M7 2v9l2-2 1 3 1.500-.6-1-2.900H13z" fill="#fff" />
						</svg>
					</Key>
					<button type="button" aria-label="Print layout view" className="flex w-7 items-center justify-center bg-[#4b4b4b]">
						<svg viewBox="0 0 18 14" className="w-[18px]">
							<rect x=".5" y="1" width="17" height="12" rx="1" fill="#7cbcf2" stroke="#2b6dab" />
							<path d="M3 4h12M3 7h12M3 10h9" stroke="#174a80" />
						</svg>
					</button>
					<Key label="Notebook view">
						<svg viewBox="0 0 18 14" className="w-4">
							<rect x="1" y="0" width="16" height="14" rx="1" fill="#333" />
							<path d="M2 3h14M2 6h14M2 9h14M2 12h14M5 0v14" stroke="#ddd" strokeWidth=".8" />
						</svg>
					</Key>
					<Key label="Full screen view">
						<svg viewBox="0 0 18 14" className="w-4">
							<rect x="0" y="0" width="18" height="14" rx="1" fill="#333" />
							<path d="M3 7V3h4zM15 7v4h-4zM4 4l3.5 3M14 10l-3.5-3" fill="#fff" stroke="#fff" />
						</svg>
					</Key>
				</div>
			</div>
			<div className="flex flex-1 flex-col">
				<div className="h-[15px] border-t border-[#dcdcdc] bg-linear-to-b from-[#f4f4f4] to-white" />
				<div className="flex h-[18px] items-center border-t border-[#999] bg-linear-to-b from-[#f1f1f2] to-[#dddfe2] leading-[17px] *:h-full">
					<span className="w-[121px] border-r border-[#999] pl-[5px]">Print Layout View</span>
					<span className="flex w-[49px] justify-between border-r border-[#999] px-[5px]">
						<span>Sec</span>
						<span>1</span>
					</span>
					<span className="flex w-[118px] justify-between border-r border-[#999] pr-[26px] pl-2">
						<span>Pages:</span>
						<span className="text-[11px]">1 of 3</span>
					</span>
					<span className="flex w-[136px] justify-between border-r border-[#999] pr-5 pl-2">
						<span>Words:</span>
						<span className="text-[11px]">260 of 260</span>
					</span>
					<span className="flex w-10 items-center justify-center border-r border-[#999]">
						<svg viewBox="0 0 20 14" className="w-5">
							<path d="M1 3c3-2 6-2 8 0 2-2 5-2 8 0v9c-3-1-6-1-8 1-2-2-5-2-8-1z" fill="#fafafa" stroke="#8d3a2c" strokeWidth="1.2" />
							<path d="M9 3v10M3 5h4M3 7h4M3 9h4" stroke="#999" strokeWidth=".7" />
							<path d="m13 1 6 6M19 1l-6 6" stroke="#d9202a" strokeWidth="2.5" />
						</svg>
					</span>
					<label htmlFor={zoomId} className="ml-auto pr-3 text-[11px]">
						132%
					</label>
					<input
						id={zoomId}
						type="range"
						min={0}
						max={100}
						defaultValue={56}
						className="w-[100px] appearance-none bg-transparent [&::-webkit-slider-runnable-track]:h-[5px] [&::-webkit-slider-runnable-track]:rounded-full [&::-webkit-slider-runnable-track]:border [&::-webkit-slider-runnable-track]:border-[#777] [&::-webkit-slider-runnable-track]:bg-[#bbb] [&::-webkit-slider-thumb]:-mt-[4px] [&::-webkit-slider-thumb]:h-[11px] [&::-webkit-slider-thumb]:w-[11px] [&::-webkit-slider-thumb]:appearance-none [&::-webkit-slider-thumb]:rounded-full [&::-webkit-slider-thumb]:border-2 [&::-webkit-slider-thumb]:border-[#8a8a8a] [&::-webkit-slider-thumb]:bg-radial [&::-webkit-slider-thumb]:from-[#555] [&::-webkit-slider-thumb]:from-20% [&::-webkit-slider-thumb]:to-white [&::-webkit-slider-thumb]:to-40%"
					/>
					<svg viewBox="0 0 12 17" className="mr-[2px] ml-4 w-3" stroke="#777">
						<path d="M1 16 11 6M5 16l6-6M8.500 16.500 11 14" />
					</svg>
				</div>
			</div>
		</footer>
	)
}

const Adobe = ({ text, border, fill, ink }: { text: string; border: string; fill: string; ink: string }) => (
	<>
		<rect x="2" y="2" width="32" height="32" fill={fill} stroke={border} strokeWidth="2" />
		<text x="18" y="24" fontSize="18" fontWeight="600" textAnchor="middle" fill={ink}>
			{text}
		</text>
	</>
)

const Folder = ({ children }: { children: ReactNode }) => (
	<>
		<path d="M1 6c0-1 1-2 2-2h9l3 3h19v9H1z" fill="#7aa3b9" />
		<path d="M0 9h36v21c0 1-.5 2-2 2H2c-1.500 0-2-1-2-2z" fill="#95bdd1" stroke="#6c95aa" strokeWidth=".6" />
		<g fill="none" stroke="#6390a8" strokeWidth="2">
			{children}
		</g>
	</>
)

const WordW = ({ x = 0, y = 0, scale = 1 }: { x?: number; y?: number; scale?: number }) => (
	<g transform={`translate(${x} ${y}) scale(${scale})`} fill="none" strokeLinecap="round" strokeLinejoin="round">
		<path d="M4 6 9 31 19 13l6 18L32 7" stroke="#0d6c9b" strokeWidth="8" />
		<path d="M4 6 9 31 19 13l6 18L32 7" stroke="#21a5d8" strokeWidth="6" />
	</g>
)

const Chrome = ({ x = 0, y = 0, scale = 1 }: { x?: number; y?: number; scale?: number }) => (
	<g transform={`translate(${x} ${y}) scale(${scale})`}>
		<circle cx="18" cy="18" r="17" fill="#f7cf3c" />
		<path d="M3.3 9.5A17 17 0 0 1 33.6 11H18a7 7 0 0 0-6.500 4.500z" fill="#e2402f" />
		<path d="M3.3 9.5 11.6 21A7 7 0 0 0 20 24.700L16 35A17 17 0 0 1 3.300 9.500z" fill="#4cae4a" />
		<circle cx="18" cy="18" r="7.8" fill="#f6f6f6" />
		<circle cx="18" cy="18" r="6.2" fill="#4789d4" />
	</g>
)

const MiniWindow = ({ children }: { children?: ReactNode }) => (
	<>
		<path d="M0 8h36v21H0z" fill="#c3c7ce" stroke="#aaa" strokeWidth=".5" />
		<path d="M0 8h36v4H0z" fill="#9298a3" />
		<path d="M7 12h23v14H7z" fill="#fff" />
		{children}
	</>
)

interface DockIcon {
	name: string
	running?: boolean
	badge?: string
	art: ReactNode
}

const DOCK_APPS: DockIcon[] = [
	{
		name: 'Finder',
		running: true,
		art: (
			<>
				<path d="M2 5h32v26H2z" fill="#6c98e2" />
				<path d="M2 5h18c-3 6-4 10-4 14h4v12H2z" fill="#c2d8f8" />
				<path d="M22 1c-5 7-6 12-6 18h5c-1 5 0 10 1 15M7 23c6 5 16 5 22 0M10 11v3M27 11v3" fill="none" stroke="#1d2430" strokeWidth="1.6" />
			</>
		),
	},
	{
		name: 'Launchpad',
		art: (
			<>
				<circle cx="18" cy="18" r="17" fill="#bfc1c4" stroke="#8d8f92" />
				<path d="M18 1a17 17 0 0 1 12 5L18 18zM18 35a17 17 0 0 1-12-5l12-12z" fill="#e4e5e7" />
				<path d="M28 7c-7 0-11 4-14 8l-5 1-3 5 5-1 5 5-1 5 5-3 1-5c4-3 7-8 7-15z" fill="#3d3f43" />
				<circle cx="21" cy="14" r="2.2" fill="#c8cacd" />
				<path d="m11 22-3 6 6-3z" fill="#3d3f43" />
			</>
		),
	},
	{
		name: 'Mission Control',
		art: (
			<>
				<rect x="0" y="3" width="36" height="31" rx="3" fill="#53565c" />
				<path d="M3 7h15v10H3z" fill="#f0b06a" />
				<path d="M3 12h15v2H3z" fill="#5c2d18" />
				<path d="M3 14h15v3H3z" fill="#c9702c" />
				<path d="M21 11h12v15H21z" fill="#2f6e2b" />
				<ellipse cx="27" cy="18" rx="5" ry="4" fill="#6cc24a" />
				<path d="M7 20h13v10H7z" fill="#eef3f6" />
				<path d="M8 25h11v4H8z" fill="#5aa06c" />
			</>
		),
	},
	{
		name: 'App Store',
		badge: '2',
		art: (
			<>
				<circle cx="18" cy="18" r="17" fill="#1d85e6" stroke="#c9d4de" strokeWidth="1.5" />
				<path d="M18 2a16 16 0 0 1 15 12c-9 4-21 4-30 0A16 16 0 0 1 18 2z" fill="#5cb1f7" />
				<path d="M19 7 9 26M16 7l11 19M6 21h24" fill="none" stroke="#fff" strokeWidth="3" />
			</>
		),
	},
	{
		name: 'Safari',
		running: true,
		art: (
			<>
				<circle cx="18" cy="18" r="16.5" fill="#dadcdf" stroke="#6e7175" strokeWidth="1.5" />
				<circle cx="18" cy="18" r="13" fill="#3d9be0" />
				<path d="M18 6v24M6 18h24M10 10l16 16M26 10 10 26" stroke="#bfe0f7" strokeWidth="1.2" />
				<path d="M29 7 20 20l-4-4z" fill="#e2492c" />
				<path d="m7 29 9-13 4 4z" fill="#f3f3f3" />
			</>
		),
	},
	{ name: 'Chrome', running: true, art: <Chrome /> },
	{
		name: 'iTunes',
		running: true,
		art: (
			<>
				<circle cx="18" cy="18" r="17" fill="#1f74b8" stroke="#c2cbd3" strokeWidth="1.5" />
				<circle cx="18" cy="13" r="11" fill="#4aa0da" />
				<path d="M14 26V11l12-3v15" fill="none" stroke="#f2f7fb" strokeWidth="2.5" />
				<path d="M13 9.5 27 6.5v4l-14 3z" fill="#f2f7fb" />
				<ellipse cx="11.5" cy="26" rx="3.5" ry="3" fill="#f2f7fb" />
				<ellipse cx="23.5" cy="23.5" rx="3.5" ry="3" fill="#f2f7fb" />
			</>
		),
	},
	{
		name: 'uTorrent',
		art: (
			<>
				<circle cx="18" cy="18" r="18" fill="#76b83f" />
				<path d="m4 10 6-1 4 11c2 4 7 2 6-2L17 7l6-1 4 12c1 3 3 4 5 4l3 1-2 4c-4 0-6-1-8-4-2 4-6 4-8 3l1 8-7 1z" fill="#fff" />
			</>
		),
	},
	{
		name: 'Vuze',
		running: true,
		art: (
			<>
				<rect x="1" y="2" width="34" height="33" rx="4" fill="#1450b4" />
				<path d="M1 6a4 4 0 0 1 4-4h26a4 4 0 0 1 4 4v6L1 24z" fill="#1b6fd6" />
				<path d="M17 6c4-2 7 2 6 6l-3 7 4 4 5-4-2 5 4-1-4 3-7 1-4 5-9-1 4-3-4-6c0-5 5-8 8-10z" fill="#fff" />
			</>
		),
	},
	{ name: 'Photoshop', running: true, art: <Adobe text="Ps" border="#7fd0f7" fill="#14225c" ink="#8fd5fa" /> },
	{ name: 'Illustrator', art: <Adobe text="Ai" border="#f5ad35" fill="#3b2208" ink="#fbb748" /> },
	{ name: 'Premiere Pro', art: <Adobe text="Pr" border="#d879f0" fill="#30103c" ink="#e493f8" /> },
	{ name: 'Encore', art: <Adobe text="En" border="#a4b2f2" fill="#1b1c58" ink="#b0bdf8" /> },
	{
		name: 'Final Cut Pro',
		art: (
			<>
				<path d="m2 14 32-1 2 19-32 4z" fill="#efefef" />
				<path d="m5 17 27-2 2 14-27 4z" fill="#58b3d8" />
				<path d="m5 17 14 7-12 9z" fill="#4aa65a" />
				<path d="m32 15-13 9-14-7z" fill="#8f5fc4" />
				<path d="m34 29-15-5 13-9z" fill="#d8443c" />
				<path d="m34 29-15-5-12 9z" fill="#e8a53c" />
				<circle cx="20" cy="24" r="4" fill="#fff" opacity=".8" />
				<path d="M0 8 30-1l1 5L2 13zM2 12h31v3L3 16z" fill="#777" />
				<path d="m4 7 4-1 4 4-4 1zM13 4l4-1 4 4-4 1zM22 1l4-1 4 4-4 1z" fill="#eee" />
			</>
		),
	},
	{ name: 'Word', running: true, art: <WordW /> },
	{
		name: 'PowerPoint',
		running: true,
		art: (
			<g fill="none" strokeLinecap="round" strokeLinejoin="round">
				<path d="M9 5h15c11 3 8 15-4 15H10" stroke="#a82c0c" strokeWidth="7" />
				<path d="M9 5h15c11 3 8 15-4 15H10" stroke="#f0592c" strokeWidth="5.5" />
				<path d="M9 20v12" stroke="#ec5429" strokeWidth="7.5" />
			</g>
		),
	},
	{
		name: 'iMovie',
		art: (
			<>
				<path d="m18 1 4 11 14-1-11 8 7 15-14-9-13 9 6-14L0 13l13-1z" fill="#2c2b28" stroke="#d9c98e" strokeWidth="1.5" />
				<circle cx="21" cy="18" r="5.5" fill="#e3d391" />
				<path d="M17 16h8v3h-8z" fill="#3a372e" />
			</>
		),
	},
	{
		name: 'FaceTime',
		art: (
			<>
				<path d="m25 17 10-8v20l-10-8z" fill="#c9cbce" stroke="#85878a" strokeWidth=".6" />
				<rect x="0" y="7" width="25" height="24" rx="4" fill="#d3d5d8" stroke="#85878a" strokeWidth=".6" />
				<circle cx="12.5" cy="19" r="9" fill="#1c2b40" />
				<circle cx="12.5" cy="19" r="5.5" fill="#2b6cb4" />
				<circle cx="11" cy="17" r="2" fill="#a8d3f4" />
			</>
		),
	},
	{
		name: 'Photo Booth',
		art: (
			<>
				<path d="M0 1h27v34H0z" fill="#cfcfcf" />
				<path d="M2 4h23v22H2z" fill="#d51a14" />
				<path d="M6 4v22M11 4v22M16 4v22M21 4v22" stroke="#8c0805" />
				<path d="M2 26h23v9H2z" fill="#e9e2da" />
				<path d="M8 28h9M9 28l-2 7M16 28l2 7" stroke="#333" strokeWidth="1.5" />
				<path d="m25 10 11 3-7 22-10-4z" fill="#f5f5f5" stroke="#999" strokeWidth=".5" />
				<g fill="#4e342b">
					<circle cx="29" cy="15" r="2.5" />
					<circle cx="27" cy="22" r="2.5" />
					<circle cx="24.5" cy="29" r="2.5" />
				</g>
			</>
		),
	},
	{
		name: 'iPhoto',
		art: (
			<>
				<path d="m0 6 31-5 3 24L3 31z" fill="#f4f4f4" />
				<path d="m3 8 26-4 2 19L5 27z" fill="#ef9a28" />
				<path d="m17 9 10-3-7 6 8 1-8 1-2 12-2-12-10 4 8-6-6-3z" fill="#241508" />
				<rect x="10" y="20" width="26" height="16" rx="2" fill="#a7b4c0" stroke="#6c7680" strokeWidth=".6" />
				<circle cx="25" cy="28" r="6" fill="#e4e8eb" />
				<circle cx="25" cy="28" r="4" fill="#26313e" />
			</>
		),
	},
	{
		name: 'System Preferences',
		art: (
			<>
				<rect x="1" y="4" width="34" height="30" fill="#b8babd" stroke="#e3e3e3" />
				<rect x="3" y="6" width="30" height="26" fill="#4a4c50" />
				<circle cx="18" cy="19" r="9" fill="none" stroke="#d4d5d7" strokeWidth="3" />
				<circle cx="18" cy="19" r="11.5" fill="none" stroke="#d4d5d7" strokeWidth="2" strokeDasharray="2 2" />
				<path d="M18 19V9M18 19l8 6M18 19l-8 6" stroke="#d4d5d7" strokeWidth="2" />
				<circle cx="18" cy="19" r="3" fill="#d4d5d7" />
			</>
		),
	},
	{
		name: 'Paintbrush',
		art: (
			<>
				<rect x="0" y="0" width="36" height="36" fill="#eebb37" />
				<path d="M0 0h36v10L0 26z" fill="#f8e0a0" />
				<path d="M2 28C10 24 9 11 20 10l14 2c-2 14-12 22-22 23-3-4-6-4-10-7z" fill="#fbfbf7" />
				<circle cx="16" cy="6" r="3.5" fill="#e63a2b" />
				<circle cx="24" cy="15" r="4.5" fill="#f3cd3b" />
				<circle cx="24" cy="7" r="2" fill="#bcc93b" />
				<circle cx="13" cy="14" r="2.2" fill="#f08a3a" />
				<circle cx="16" cy="20" r="2.5" fill="#a8d0e8" />
				<circle cx="14" cy="27" r="2" fill="#e63a2b" />
			</>
		),
	},
	{
		name: 'Comic reader',
		art: (
			<>
				<path d="m2 24 16 5 16-7v6l-16 8L2 30z" fill="#8ba2b5" />
				<path d="M3 10c4 0 6 4 7 9l10 4 14-5v5l-15 7L5 25c-3-4-3-10-2-15z" fill="#e6a823" stroke="#8a5d0d" strokeWidth=".6" />
				<path d="m11 2 11-2 10 14-12 8-6-3z" fill="#2fae36" />
				<path d="m18 4 5 8 6 1" fill="none" stroke="#7be07c" strokeWidth="2" />
			</>
		),
	},
	{
		name: 'VLC',
		running: true,
		art: (
			<>
				<path d="M4 26h28l4 9H0z" fill="#f08a18" />
				<path d="M16 0h4l8 28c-5 3-15 3-20 0z" fill="#f6902a" />
				<path d="M13.5 9h9l2 7c-4 2-9 2-13 0zM10 21c5 2 11 2 16 0l1.500 5c-6 3-13 3-19 0z" fill="#f1f1f1" />
			</>
		),
	},
]

const DOCK_FILES: DockIcon[] = [
	{
		name: 'Applications',
		art: (
			<Folder>
				<path d="M19 12 11 27M17 12l9 15M9 23h19" />
			</Folder>
		),
	},
	{
		name: 'Documents',
		art: (
			<Folder>
				<path d="M12 12h8l5 5v11H12z" />
			</Folder>
		),
	},
	{
		name: 'Downloads',
		art: (
			<Folder>
				<circle cx="18" cy="20" r="8.5" fill="#6390a8" />
				<path d="M18 13v6M14 18h8l-4 5zM15 25h6" stroke="#a5c8da" />
			</Folder>
		),
	},
	{
		name: 'Presentation window',
		art: (
			<>
				<path d="M0 4h36v26H0z" fill="#d9d3d0" />
				<path d="M0 4h36v4H0z" fill="#b8aeab" />
				<path d="M8 11h22v15H8z" fill="#fff" stroke="#999" strokeWidth=".5" />
				<path d="M14 17h10" stroke="#777" />
				<path d="M26 24h6c4 1 3 5-1 5h-3v4" fill="none" stroke="#d8431c" strokeWidth="2.5" />
			</>
		),
	},
	{
		name: 'Document window',
		art: (
			<MiniWindow>
				<WordW x={23} y={22} scale={0.35} />
			</MiniWindow>
		),
	},
	{
		name: 'Script window',
		art: (
			<MiniWindow>
				<path d="M10 15h10M10 17h14M10 19h12M10 21h14M10 23h10" stroke="#bbb" strokeWidth=".7" />
				<WordW x={23} y={22} scale={0.35} />
			</MiniWindow>
		),
	},
	{
		name: 'Browser window',
		art: (
			<>
				<path d="M0 6h36v23H0z" fill="#fafafa" stroke="#999" strokeWidth=".5" />
				<path d="M0 6h36v2H0z" fill="#333" />
				<path d="M0 8h36v3H0z" fill="#ddd" />
				<path d="M5 15h12v8H5z" fill="#a9c6a0" />
				<path d="M20 15h10M20 18h8M5 26h16" stroke="#bbb" />
				<Chrome x={23} y={22} scale={0.36} />
			</>
		),
	},
	{
		name: 'Notes window',
		art: (
			<MiniWindow>
				<path d="M12 15h8M12 17h12M12 19h6M12 21h10" stroke="#bbb" strokeWidth=".7" />
				<WordW x={23} y={22} scale={0.35} />
			</MiniWindow>
		),
	},
	{
		name: 'Trash',
		art: (
			<>
				<path d="m3 5 4 27c3 4 19 4 22 0l4-27z" fill="#777a7e" opacity=".85" />
				<path d="m7 8 3 25M12 9l2 25M18 9v26M24 9l-2 25M29 8l-3 25M4 14c8 4 20 4 28 0M5 20c8 4 18 4 26 0M6 26c7 4 17 4 24 0" fill="none" stroke="#d8dadc" strokeWidth=".8" />
				<ellipse cx="18" cy="5" rx="15.5" ry="4.5" fill="#4a4c50" stroke="#dcdee0" strokeWidth="1.5" />
				<path d="m6 7 4-5 5 1 4-2 5 2 5 1 1 4-5 4-7-1-6 1z" fill="#f2f2f2" stroke="#bbb" strokeWidth=".6" />
			</>
		),
	},
]

const DockItem = ({ icon }: { icon: DockIcon }) => (
	<button type="button" aria-label={icon.name} className="relative flex h-full w-9 items-start">
		<svg viewBox="0 0 36 36" className="h-9 w-9 font-['Open_Sans',sans-serif]">
			{icon.art}
		</svg>
		{icon.badge && (
			<span className="absolute top-0 right-0 h-3 w-3 rounded-full border border-white bg-[#e0212b] text-[9px] leading-[10px] text-white">
				{icon.badge}
			</span>
		)}
		{icon.running && <span className="absolute bottom-[3px] left-[14px] h-1 w-2 rounded-full bg-[#e6f6ff] shadow-[0_0_4px_2px_#7cbcf0]" />}
	</button>
)

const Dock = () => (
	<div className="relative mx-4 h-16">
		<div className="absolute inset-x-0 top-[29px] h-[27px] bg-linear-to-b from-[#5d6168] to-[#8e9196] [clip-path:polygon(22px_0,calc(100%-22px)_0,100%_100%,0_100%)]" />
		<div className="absolute inset-x-0 bottom-0 h-2 border-t border-[#d4d5d7] bg-linear-to-b from-[#b3b5b9] to-[#5b5d61]" />
		<div className="relative flex h-full justify-center gap-[5px] pt-3 pl-1">
			{DOCK_APPS.map((icon) => (
				<DockItem key={icon.name} icon={icon} />
			))}
			<svg viewBox="0 0 15 44" className="h-11 w-[15px]">
				<path d="M4 21h7M4 25h7M3 29h9M3 33h9M2 37h11M2 41h11" stroke="#c9cbce" strokeWidth="2" />
			</svg>
			{DOCK_FILES.map((icon) => (
				<DockItem key={icon.name} icon={icon} />
			))}
		</div>
	</div>
)

export default function App() {
	return (
		<div className="relative flex min-h-screen flex-col overflow-hidden bg-linear-to-b from-[#050a18] via-[#10284c] to-[#050a18] font-['Noto_Sans',sans-serif]">
			<svg className="pointer-events-none absolute inset-0 h-full w-full" aria-hidden="true">
				{STARS.map(([x, y, r]) => (
					<circle key={`${x}-${y}`} cx={x} cy={y} r={r} fill="#c3d3ea" opacity=".6" />
				))}
			</svg>
			<MenuBar />
			<div className="relative mt-2 mr-[9px] ml-[3px] flex flex-1 flex-col overflow-hidden rounded-t-[5px]">
				<div className="bg-linear-to-b from-[#e8e8e8] to-[#b3b3b3]">
					<TitleBar />
					<Toolbar />
				</div>
				<TabStrip />
				<Ribbon />
				<DocumentArea />
				<StatusBar />
			</div>
			<Dock />
		</div>
	)
}
